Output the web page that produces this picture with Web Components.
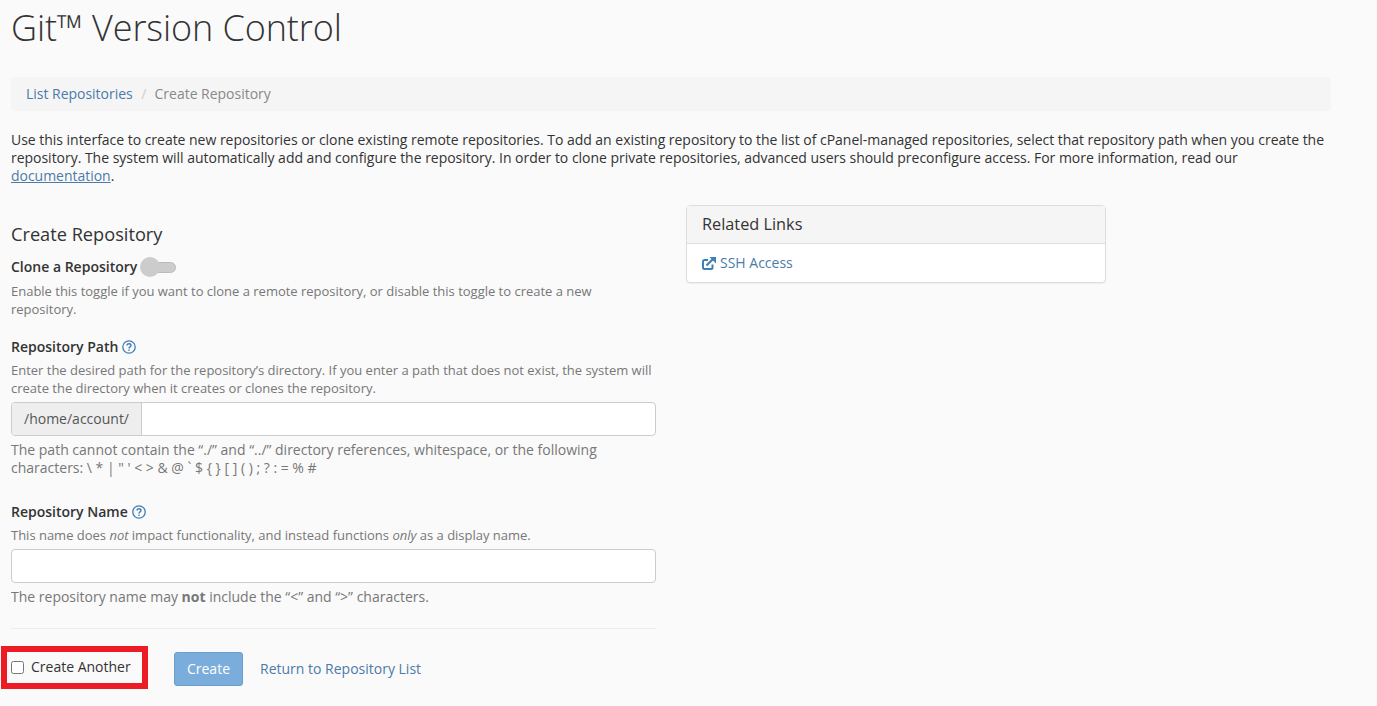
<!DOCTYPE html>
<html>
<head>
<meta charset="utf-8">
<title>Git Version Control</title>
<style>
    html, body { margin: 0; padding: 0; background: #fafafa; }
    body { font: 14px/18px "Open Sans", sans-serif; color: #333; height: 706px; overflow: hidden; }
    a { color: #4c7ba8; }
</style>
</head>
<body>
<git-page></git-page>

<script>
const FONT = '"Open Sans", sans-serif';

class HelpIcon extends HTMLElement {
    connectedCallback() {
        this.attachShadow({ mode: 'open' });
        this.shadowRoot.innerHTML = `
            <style>
                :host { display: inline-flex; width: 14px; height: 14px; color: #3f7fb3; }
                svg { display: block; }
            </style>
            <svg width="14" height="14" viewBox="0 0 14 14" fill="none" stroke="currentColor">
                <circle cx="7" cy="7" r="6.2" stroke-width="1.3"/>
                <path d="M5 5.6c0-1.2.9-1.9 2-1.9s2 .7 2 1.7c0 1.500-2 1.500-2 3" stroke-width="1.4"/>
                <rect x="6.3" y="9.500" width="1.400" height="1.400" fill="currentColor" stroke="none"/>
            </svg>`;
    }
}

class ToggleSwitch extends HTMLElement {
    connectedCallback() {
        this.attachShadow({ mode: 'open' });
        this.shadowRoot.innerHTML = `
            <style>
                :host { display: inline-block; position: relative; width: 36px; height: 20px; }
                .track { position: absolute; left: 2px; right: 0; top: 5px; height: 11px; background: #ccc; border-radius: 6px; border: 1px solid #bbb; box-sizing: border-box; }
                .knob { position: absolute; left: 0; top: 0; width: 20px; height: 20px; border-radius: 50%; background: #ccc; }
            </style>
            <div class="track"></div>
            <div class="knob"></div>`;
    }
}

class CrumbBar extends HTMLElement {
    connectedCallback() {
        this.attachShadow({ mode: 'open' });
        this.shadowRoot.innerHTML = `
            <style>
                :host { display: block; height: 34px; box-sizing: border-box; width: 1320px; background: #f5f5f5; border-radius: 4px; padding: 8px 15px; font: 14px/18px ${FONT}; color: #888; letter-spacing: -0.02px; }
                a { color: #4c7ba8; text-decoration: none; }
                .sep { color: #ccc; padding: 0 4.500px 0 5px; }
            </style>
            <a href="#">List Repositories</a><span class="sep"> / </span><span>Create Repository</span>`;
    }
}

class RepoField extends HTMLElement {
    connectedCallback() {
        this.attachShadow({ mode: 'open' });
        this.shadowRoot.innerHTML = `
            <style>
                :host { display: block; font: 14px/18px ${FONT}; }
                .label { display: flex; align-items: center; gap: 4px; font-weight: 600; color: #333; line-height: 18px; }
                .desc { font-size: 13px; line-height: 18px; color: #777; margin-top: 5px; letter-spacing: -0.01px; }
                .control { margin-top: 5px; }
                .note { color: #777; margin-top: 5px; }
            </style>
            <div class="label"><slot name="label"></slot></div>
            <div class="desc"><slot name="desc"></slot></div>
            <div class="control"><slot name="control"></slot></div>
            <div class="note"><slot name="note"></slot></div>`;
    }
}

class TextBox extends HTMLElement {
    connectedCallback() {
        const prefix = this.getAttribute('prefix');
        this.attachShadow({ mode: 'open' });
        this.shadowRoot.innerHTML = `
            <style>
                :host { display: flex; height: 34px; box-sizing: border-box; border: 1px solid #ccc; border-radius: 4px; background: #fff; overflow: hidden; font: 14px/18px ${FONT}; color: #555; }
                .prefix { display: flex; align-items: center; padding: 0 12px; background: #eee; border-right: 1px solid #ccc; }
                input { flex: 1; border: 0; outline: 0; background: transparent; min-width: 0; }
            </style>
            ${prefix ? `<span class="prefix">${prefix}</span>` : ''}
            <input type="text">`;
    }
}

class RelatedLinks extends HTMLElement {
    connectedCallback() {
        this.attachShadow({ mode: 'open' });
        this.shadowRoot.innerHTML = `
            <style>
                :host { display: block; width: 420px; box-sizing: border-box; background: #fff; border: 1px solid #ddd; border-radius: 4px; box-shadow: 0 1px 1px rgba(0,0,0,.05); font: 14px/18px ${FONT}; }
                .head { height: 38px; box-sizing: border-box; padding: 8px 15px; background: #f5f5f5; border-bottom: 1px solid #ddd; font-size: 16.3px; line-height: 20px; color: #333; }
                .body { height: 38px; box-sizing: border-box; padding: 10px 15px; }
                a { display: inline-flex; align-items: center; gap: 4px; color: #4c7ba8; text-decoration: none; }
                svg { display: block; }
            </style>
            <div class="head">Related Links</div>
            <div class="body">
                <a href="#">
                    <svg width="14" height="13" viewBox="0 0 14 13" fill="none">
                        <path d="M10.500 7.500v3a1.500 1.500 0 0 1-1.500 1.500H2.500A1.500 1.500 0 0 1 1 10.500V4.500A1.500 1.500 0 0 1 2.500 3H6" stroke="#3f7fb3" stroke-width="2"/>
                        <path d="M4.500 8.500 11 2" stroke="#3f7fb3" stroke-width="2.200"/>
                        <path d="M7.500 0H14V6.500Z" fill="#3f7fb3"/>
                    </svg>
                    SSH Access
                </a>
            </div>`;
    }
}

class CreateAnother extends HTMLElement {
    connectedCallback() {
        this.attachShadow({ mode: 'open' });
        this.shadowRoot.innerHTML = `
            <style>
                :host { display: flex; align-items: center; box-sizing: border-box; width: 147px; height: 43px; border: 6px solid #ed1c24; padding: 0 0 2px 4px; gap: 7px; font: 14px/18px ${FONT}; color: #333; }
                input { width: 13px; height: 13px; margin: 2px 0 0; }
            </style>
            <input type="checkbox"><span>Create Another</span>`;
    }
}

class GitPage extends HTMLElement {
    connectedCallback() {
        this.attachShadow({ mode: 'open' });
        this.shadowRoot.innerHTML = `
            <style>
                :host { display: block; padding-left: 11px; font: 14px/18px ${FONT}; color: #333; }
                a { color: #4c7ba8; text-decoration: none; }
                h1 { margin: 0; padding-top: 6px; height: 77px; box-sizing: border-box; font-size: 36px; line-height: 44px; font-weight: 300; color: #333; letter-spacing: -0.1px; }
                .intro { margin: 20px 0 0; width: 1330px; color: #333; letter-spacing: -0.025px; }
                .intro a { text-decoration: underline; }
                .cols { display: flex; margin-top: 21px; }
                .left { width: 645px; }
                .right { margin: -1px 0 0 30px; }
                h2 { margin: 0; padding-top: 17px; font-size: 18.2px; line-height: 22px; font-weight: 400; color: #333; }
                .clone { display: flex; align-items: center; height: 20px; margin-top: 12px; font-weight: 600; gap: 3px; }
                .hint { font-size: 13px; line-height: 18px; color: #777; margin-top: 5px; letter-spacing: -0.01px; }
                repo-field.path { margin-top: 20px; }
                repo-field.name { margin-top: 26px; }
                hr { border: 0; border-top: 1px solid #eee; margin: 22px 0 0; }
                .actions { display: flex; align-items: center; margin: 17px 0 0 -10px; }
                .create { margin-left: 26px; margin-top: 2px; width: 69px; height: 34px; box-sizing: border-box; border: 1px solid #6a9ec9; border-radius: 3px; background: #7aaddb; color: #fff; font: 14px ${FONT}; }
                .back { margin-left: 17px; margin-top: 2px; }
            </style>
            <h1>Git™ Version Control</h1>
            <crumb-bar></crumb-bar>
            <p class="intro">Use this interface to create new repositories or clone existing remote repositories. To add an existing repository to the list of cPanel-managed repositories, select that repository path when you create the repository. The system will automatically add and configure the repository. In order to clone private repositories, advanced users should preconfigure access. For more information, read our <a href="#">documentation</a>.</p>
            <div class="cols">
                <div class="left">
                    <h2>Create Repository</h2>
                    <div class="clone"><span>Clone a Repository</span><toggle-switch></toggle-switch></div>
                    <div class="hint">Enable this toggle if you want to clone a remote repository, or disable this toggle to create a new repository.</div>
                    <repo-field class="path">
                        <span slot="label">Repository Path</span><help-icon slot="label"></help-icon>
                        <span slot="desc">Enter the desired path for the repository’s directory. If you enter a path that does not exist, the system will create the directory when it creates or clones the repository.</span>
                        <text-box slot="control" prefix="/home/account/"></text-box>
                        <span slot="note">The path cannot contain the “./” and “../” directory references, whitespace, or the following characters: \\ * | " ' &lt; &gt; &amp; @ \` $ { } [ ] ( ) ; ? : = % #</span>
                    </repo-field>
                    <repo-field class="name">
                        <span slot="label">Repository Name</span><help-icon slot="label"></help-icon>
                        <span slot="desc">This name does <em>not</em> impact functionality, and instead functions <em>only</em> as a display name.</span>
                        <text-box slot="control"></text-box>
                        <span slot="note">The repository name may <b>not</b> include the “&lt;” and “&gt;” characters.</span>
                    </repo-field>
                    <hr>
                    <div class="actions">
                        <create-another></create-another>
                        <button class="create">Create</button>
                        <a class="back" href="#">Return to Repository List</a>
                    </div>
                </div>
                <div class="right"><related-links></related-links></div>
            </div>`;
    }
}

customElements.define('help-icon', HelpIcon);
customElements.define('toggle-switch', ToggleSwitch);
customElements.define('crumb-bar', CrumbBar);
customElements.define('repo-field', RepoField);
customElements.define('text-box', TextBox);
customElements.define('related-links', RelatedLinks);
customElements.define('create-another', CreateAnother);
customElements.define('git-page', GitPage);
</script>
</body>
</html>
